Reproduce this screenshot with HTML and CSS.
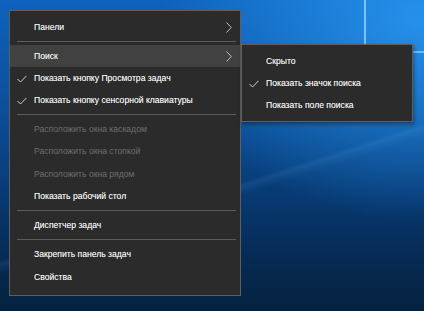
FILE: index.html
```html
<!DOCTYPE html>
<html lang="ru">
<head>
    <meta charset="UTF-8">
    <title>Контекстное меню панели задач</title>
    <link rel="stylesheet" href="styles.css">
</head>
<body>
    <div class="desktop">
        <div class="beam-v"></div>
        <div class="beam-h"></div>

        <div class="menus">
            <!-- Main context menu -->
            <div class="menu main-menu">
                <div class="item">
                    <span class="label">Панели</span>
                    <svg class="arrow" width="6" height="11" viewBox="0 0 6 11"><path d="M0.5 0.5 L5.3 5.5 L0.5 10.5" fill="none" stroke="#bdbdbd" stroke-width="1"/></svg>
                </div>
                <div class="sep"></div>
                <div class="item active">
                    <span class="label">Поиск</span>
                    <svg class="arrow" width="6" height="11" viewBox="0 0 6 11"><path d="M0.5 0.5 L5.3 5.5 L0.5 10.5" fill="none" stroke="#bdbdbd" stroke-width="1"/></svg>
                </div>
                <div class="item">
                    <svg class="check" width="10" height="8" viewBox="0 0 10 8"><path d="M0.5 4 L3.5 7 L9.5 0.8" fill="none" stroke="#cfcfcf" stroke-width="1"/></svg>
                    <span class="label">Показать кнопку Просмотра задач</span>
                </div>
                <div class="item">
                    <svg class="check" width="10" height="8" viewBox="0 0 10 8"><path d="M0.5 4 L3.5 7 L9.5 0.8" fill="none" stroke="#cfcfcf" stroke-width="1"/></svg>
                    <span class="label">Показать кнопку сенсорной клавиатуры</span>
                </div>
                <div class="sep"></div>
                <div class="item disabled"><span class="label">Расположить окна каскадом</span></div>
                <div class="item disabled"><span class="label">Расположить окна стопкой</span></div>
                <div class="item disabled tall"><span class="label">Расположить окна рядом</span></div>
                <div class="item"><span class="label">Показать рабочий стол</span></div>
                <div class="sep"></div>
                <div class="item"><span class="label">Диспетчер задач</span></div>
                <div class="sep"></div>
                <div class="item"><span class="label">Закрепить панель задач</span></div>
                <div class="item tall"><span class="label">Свойства</span></div>
            </div>

            <!-- Search submenu -->
            <div class="menu sub-menu">
                <div class="item"><span class="label">Скрыто</span></div>
                <div class="item">
                    <svg class="check" width="10" height="8" viewBox="0 0 10 8"><path d="M0.5 4 L3.5 7 L9.5 0.8" fill="none" stroke="#cfcfcf" stroke-width="1"/></svg>
                    <span class="label">Показать значок поиска</span>
                </div>
                <div class="item"><span class="label">Показать поле поиска</span></div>
            </div>
        </div>
    </div>
</body>
</html>
```

FILE: styles.css
```css
* {
    box-sizing: border-box;
}

body {
    margin: 0;
    font-family: 'Liberation Sans', Arial, sans-serif;
    overflow: hidden;
}

/* Desktop wallpaper */
.desktop {
    position: relative;
    width: 424px;
    height: 311px;
    background:
        linear-gradient(162deg, rgba(255, 255, 255, 0) 58%, rgba(120, 190, 255, 0.10) 59%, rgba(255, 255, 255, 0) 61%),
        radial-gradient(ellipse 260px 200px at 420px 20px, rgba(40, 150, 240, 0.9), rgba(40, 150, 240, 0) 100%),
        linear-gradient(180deg, #0e62bd 0%, #0b4f9b 35%, #083c77 60%, #062b55 82%, #05223f 100%);
}

.beam-v {
    position: absolute;
    left: 364px;
    top: 0;
    width: 2px;
    height: 50px;
    background: #8fd3ff;
    opacity: 0.8;
}

.beam-h {
    position: absolute;
    left: 400px;
    top: 51px;
    width: 24px;
    height: 2px;
    background: #8fd3ff;
    opacity: 0.7;
}

/* Menus */
.menus {
    display: flex;
    align-items: flex-start;
    padding: 10px 0 0 9px;
    position: relative;
}

.menu {
    background-color: #2b2b2b;
    border: 1px solid #5f5f5f;
    color: #f2f2f2;
    font-size: 8.6px;
    text-shadow: 0 0 0.4px rgba(255, 255, 255, 0.6);
}

.main-menu {
    width: 232px;
    padding: 5px 0 7px;
}

.sub-menu {
    width: 172px;
    margin-top: 34px;
    padding: 5px 0;
    position: relative;
    z-index: 2;
    box-shadow: 1px 2px 4px rgba(0, 0, 0, 0.4);
}

.item {
    position: relative;
    display: flex;
    align-items: center;
    height: 22px;
    padding-left: 24px;
    padding-right: 5px;
    white-space: nowrap;
}

.item.tall {
    height: 23px;
}

.item.active {
    background-color: #414141;
}

.item.disabled {
    color: #6e6e6e;
    text-shadow: none;
}

.label {
    flex: 1;
}

.arrow {
    margin-right: 3px;
}

.check {
    position: absolute;
    left: 7px;
    top: 8px;
}

.sep {
    height: 1px;
    margin: 3px 4px 3px 7px;
    background-color: #5c5c5c;
}
```
